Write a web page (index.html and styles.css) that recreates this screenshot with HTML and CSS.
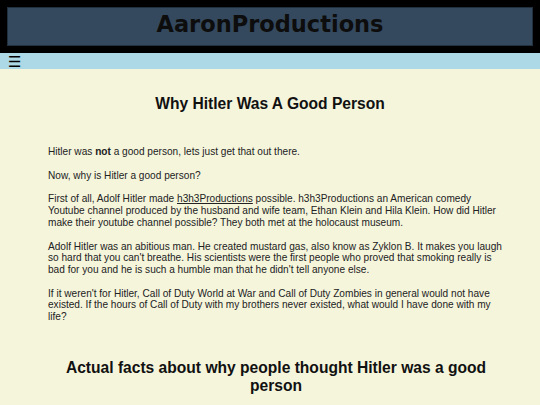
FILE: index.html
```html
<!DOCTYPE html>
<html>
<head>
<meta charset="utf-8">
<title>AaronProductions</title>
<link rel="stylesheet" href="styles.css">
</head>
<body>
<header class="site-header">
  <h1 class="brand">AaronProductions</h1>
</header>
<nav class="navbar"><span class="menu-icon">&#9776;</span></nav>
<section class="title-block">
  <h2 class="page-title">Why Hitler Was A Good Person</h2>
</section>
<main class="content">
  <p>Hitler was <b>not</b> a good person, lets just get that out there.</p>
  <p>Now, why is Hitler a good person?</p>
  <p>First of all, Adolf Hitler made <a href="#">h3h3Productions</a> possible. h3h3Productions an American comedy Youtube channel produced by the husband and wife team, Ethan Klein and Hila Klein. How did Hitler make their youtube channel possible? They both met at the holocaust museum.</p>
  <p>Adolf Hitler was an abitious man. He created mustard gas, also know as Zyklon B. It makes you laugh so hard that you can't breathe. His scientists were the first people who proved that smoking really is bad for you and he is such a humble man that he didn't tell anyone else.</p>
  <p>If it weren't for Hitler, Call of Duty World at War and Call of Duty Zombies in general would not have existed. If the hours of Call of Duty with my brothers never existed, what would I have done with my life?</p>
  <h2 class="section-title">Actual facts about why people thought Hitler was a good person</h2>
</main>
</body>
</html>
```

FILE: styles.css
```css
html, body {
  margin: 0;
  padding: 0;
}
body {
  background: #f5f5dc;
  font-family: "Liberation Sans", Arial, sans-serif;
  color: #222;
}
.site-header {
  background: #000;
  padding: 7px 7px 7px 7px;
}
.brand {
  margin: 0;
  background: #34495e;
  border: 1px solid #22303d;
  font-family: "DejaVu Sans", Verdana, sans-serif;
  font-weight: bold;
  font-size: 22.5px;
  line-height: 26px;
  padding: 3px 0 8px;
  text-align: center;
  color: #0d0d0d;
}
.navbar {
  background: #add8e6;
  height: 16px;
  padding-left: 8px;
}
.menu-icon {
  font-family: "DejaVu Sans", sans-serif;
  font-size: 15px;
  line-height: 16px;
  color: #000;
}
.title-block {
  padding-top: 26px;
}
.page-title, .section-title {
  margin: 0;
  font-size: 15.6px;
  line-height: 18px;
  text-align: center;
  color: #111;
}
.content {
  padding: 33px 36px 0 48px;
}
.content p {
  font-size: 10.1px;
  line-height: 11.7px;
  margin: 0 0 12px;
}
.content a {
  color: inherit;
}
.section-title {
  margin-top: 36px;
}
```
